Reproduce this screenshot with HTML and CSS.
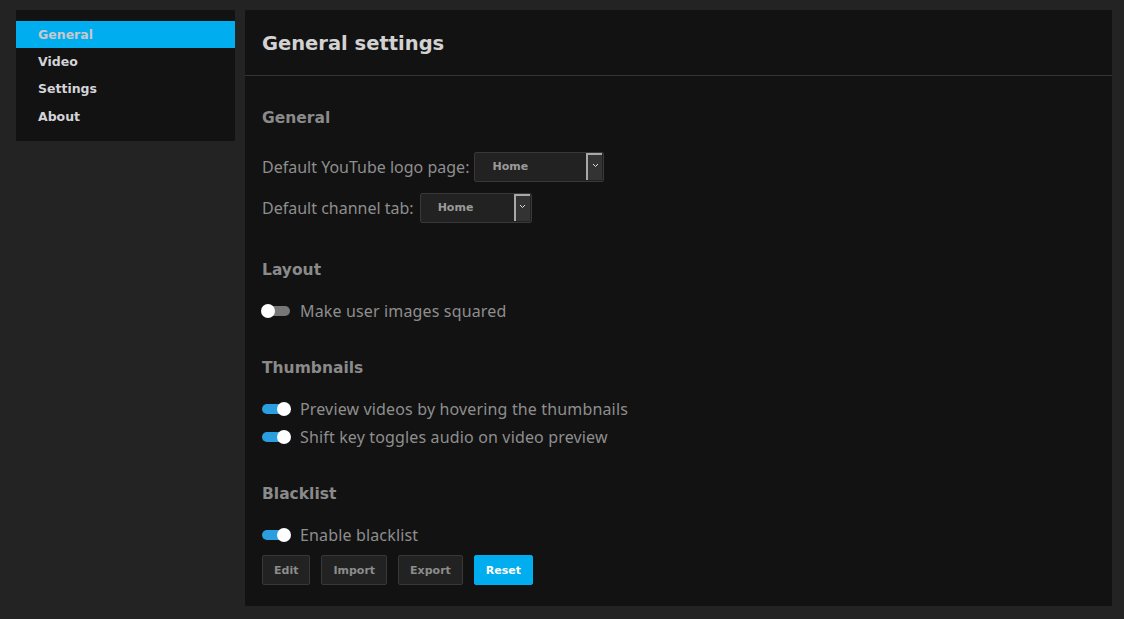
FILE: index.html
```html
<!DOCTYPE html>
<html>
<head>
<meta charset="utf-8">
<link rel="stylesheet" href="styles.css">
</head>
<body>
<div class="page">
  <nav class="sidebar">
    <div class="nav-item active">General</div>
    <div class="nav-item">Video</div>
    <div class="nav-item">Settings</div>
    <div class="nav-item">About</div>
  </nav>
  <main class="panel">
    <header class="panel-header"><h1>General settings</h1></header>
    <div class="panel-body">
      <section class="section">
        <h2>General</h2>
        <div class="field first">
          <span class="label">Default YouTube logo page:</span>
          <div class="select sel-wide"><span class="sel-text">Home</span><span class="sel-btn"><svg width="7" height="5" viewBox="0 0 7 5"><path d="M1 1l2.5 2.5L6 1" fill="none" stroke="#ddd" stroke-width="1"/></svg></span></div>
        </div>
        <div class="field last">
          <span class="label">Default channel tab:</span>
          <div class="select sel-narrow"><span class="sel-text">Home</span><span class="sel-btn"><svg width="7" height="5" viewBox="0 0 7 5"><path d="M1 1l2.5 2.5L6 1" fill="none" stroke="#ddd" stroke-width="1"/></svg></span></div>
        </div>
      </section>
      <section class="section">
        <h2>Layout</h2>
        <div class="toggle-row"><span class="toggle"></span><span class="label">Make user images squared</span></div>
      </section>
      <section class="section">
        <h2>Thumbnails</h2>
        <div class="toggle-row"><span class="toggle on"></span><span class="label">Preview videos by hovering the thumbnails</span></div>
        <div class="toggle-row"><span class="toggle on"></span><span class="label">Shift key toggles audio on video preview</span></div>
      </section>
      <section class="section last-section">
        <h2>Blacklist</h2>
        <div class="toggle-row"><span class="toggle on"></span><span class="label">Enable blacklist</span></div>
        <div class="buttons">
          <button class="btn">Edit</button>
          <button class="btn">Import</button>
          <button class="btn">Export</button>
          <button class="btn primary">Reset</button>
        </div>
      </section>
    </div>
  </main>
</div>
</body>
</html>
```

FILE: styles.css
```css
* { box-sizing: border-box; }
html, body { margin: 0; padding: 0; background: #232323; }
body { font-family: "DejaVu Sans", sans-serif; }
.page {
  display: flex;
  align-items: flex-start;
  gap: 10px;
  padding: 10px 12px 0 16px;
}
.sidebar {
  width: 219px;
  background: #121212;
  padding: 11px 0 12px;
}
.nav-item {
  height: 27px;
  line-height: 28px;
  padding-left: 22px;
  font-size: 12.5px;
  font-weight: bold;
  color: #d4d4d8;
}
.nav-item:last-child { line-height: 29px; }
.nav-item.active { background: #00adee; color: #c8c8cc; }
.panel {
  flex: 1;
  background: #121212;
}
.panel-header {
  height: 66px;
  border-bottom: 1px solid #343434;
  display: flex;
  align-items: center;
  padding: 0 17px;
}
.panel-header h1 {
  margin: 0;
  font-size: 19.5px;
  font-weight: bold;
  color: #d2d2d2;
  padding-top: 1px;
}
.panel-body { padding: 30px 17px 21px; }
.section {
  display: flex;
  flex-direction: column;
  align-items: flex-start;
  margin-bottom: 31px;
}
.section.last-section { margin-bottom: 0; }
.section h2 {
  margin: 0 0 15px;
  height: 24px;
  line-height: 24px;
  font-size: 15.5px;
  font-weight: bold;
  color: #8a8a8a;
}
.label {
  font-family: "Noto Sans", sans-serif;
  font-size: 16px;
  color: #8e8e8e;
}
.toggle-row .label { letter-spacing: 0.15px; }
.field {
  display: flex;
  align-items: center;
  gap: 5px;
  height: 30px;
  margin-bottom: 11px;
}
.field.first { margin-top: 7px; }
.field.last { margin-bottom: 4px; }
.field.last .select { margin-left: 1px; }
.select {
  height: 30px;
  background: #222;
  border: 1px solid #383838;
  border-radius: 2px;
  display: flex;
  align-items: stretch;
}
.sel-wide { width: 130px; }
.sel-narrow { width: 112px; }
.sel-text {
  flex: 1;
  padding-left: 17px;
  font-size: 11px;
  font-weight: bold;
  color: #9a9a9a;
  line-height: 28px;
}
.sel-btn {
  width: 16px;
  background: #333;
  border-left: 2px solid #a8a8a8;
  border-top: 2px solid #a8a8a8;
  margin: 0 1px 1px 0;
  display: flex;
  align-items: center;
  justify-content: center;
  padding-bottom: 4px;
}
.toggle-row {
  display: flex;
  align-items: center;
  gap: 10px;
  height: 28px;
}
.toggle {
  position: relative;
  width: 28px;
  height: 10px;
  border-radius: 5px;
  background: #777;
}
.toggle::after {
  content: "";
  position: absolute;
  left: -1px;
  top: -2px;
  width: 14px;
  height: 14px;
  border-radius: 50%;
  background: #fff;
}
.toggle.on { background: #2a9fe0; }
.toggle.on::after { left: auto; right: -1px; }
.buttons {
  display: flex;
  gap: 11px;
  margin-top: 6px;
}
.btn {
  height: 30px;
  padding: 0 11px;
  background: #222;
  border: 1px solid #383838;
  border-radius: 2px;
  font-family: "DejaVu Sans", sans-serif;
  font-size: 11px;
  font-weight: bold;
  color: #8c8c8c;
}
.btn.primary {
  background: #00adee;
  border-color: #00adee;
  color: #fff;
}
```
